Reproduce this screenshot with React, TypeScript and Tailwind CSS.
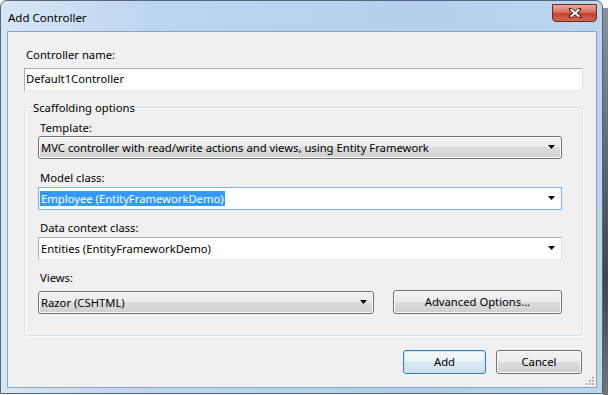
import React from "react";

const font = { fontFamily: '"Noto Sans", "Open Sans", Arial, sans-serif' };

function Arrow() {
  return (
    <svg width="8" height="5" viewBox="0 0 8 5" className="shrink-0">
      <path d="M0 0 H7 L3.5 4 Z" fill="#000" />
    </svg>
  );
}

function Label({ children, className = "" }: { children: React.ReactNode; className?: string }) {
  return <div className={"h-[15px] leading-[15px] text-[11.25px] text-black " + className}>{children}</div>;
}

function DropButton({ text, className = "" }: { text: string; className?: string }) {
  return (
    <div
      className={
        "h-[23px] rounded-[3px] border border-[#707070] flex items-center pl-[2px] pr-[5px] bg-[linear-gradient(to_bottom,#f2f2f2_0%,#ebebeb_50%,#dddddd_50%,#cfcfcf_100%)] shadow-[inset_0_0_0_1px_#fcfcfc] " +
        className
      }
    >
      <span className="flex-1 text-[11.25px] leading-[15px] text-black whitespace-nowrap">{text}</span>
      <Arrow />
    </div>
  );
}

function Combo({ text, selected = false, focus = false }: { text: string; selected?: boolean; focus?: boolean }) {
  return (
    <div
      className={
        "h-[23px] border flex items-center pl-[1px] pr-[5px] bg-white " +
        (focus ? "border-[#7eb4ea]" : "border-[#abadb3] border-b-[#e3e9ef] border-r-[#dbdfe6]")
      }
    >
      <span className="flex-1 flex">
        <span
          className={
            "text-[11.25px] leading-[15px] px-[1px] whitespace-nowrap " +
            (selected ? "bg-[#3399ff] text-white" : "text-black")
          }
        >
          {text}
        </span>
      </span>
      <Arrow />
    </div>
  );
}

function Button({ text, def = false, className = "" }: { text: string; def?: boolean; className?: string }) {
  return (
    <div
      className={
        "h-[24px] rounded-[3px] border flex items-center justify-center text-[11.25px] text-black " +
        (def
          ? "border-[#3c7fb1] bg-[linear-gradient(to_bottom,#f4f9fc_0%,#e8f2f8_50%,#d9e8f1_50%,#cfe1ec_100%)] shadow-[inset_0_0_0_1px_#bfe9fb]"
          : "border-[#707070] bg-[linear-gradient(to_bottom,#f2f2f2_0%,#ebebeb_50%,#dddddd_50%,#cfcfcf_100%)] shadow-[inset_0_0_0_1px_#fcfcfc]") +
        " " +
        className
      }
    >
      {text}
    </div>
  );
}

export default function App() {
  return (
    <div className="w-[608px] h-[395px] bg-white flex overflow-hidden" style={font}>
      <div className="w-[603px] h-[394px] flex flex-col rounded-t-[7px] border border-[#52667c] bg-[linear-gradient(to_right,#d7e6f5_0%,#bcd5ef_25%,#b4cfed_70%,#bdd6ef_100%)] pl-[6px] pr-[5px] pb-[5px] relative">
        <div className="h-[30px] flex items-start shrink-0">
          <div className="pt-[9px] pl-[1px] text-[11.5px] leading-[15px] text-black">Add Controller</div>
          <div className="flex-1" />
          <div className="mt-[3px] w-[45px] h-[18px] rounded-b-[4px] border border-[#6c2a24] bg-[linear-gradient(to_bottom,#e9a99b_0%,#d7725f_45%,#c4402a_55%,#d06a4f_100%)] flex items-center justify-center">
            <svg width="12" height="10" viewBox="0 0 12 10">
              <path d="M1 1 L11 9 M11 1 L1 9" stroke="#3a1a16" strokeWidth="3.4" strokeLinecap="square" />
              <path d="M1.5 1.2 L10.5 8.8 M10.5 1.2 L1.5 8.8" stroke="#ffffff" strokeWidth="2" />
            </svg>
          </div>
        </div>
        <div className="flex-1 border border-[#8ea4bd] bg-[#f0f0f0] flex flex-col pl-[16px] pr-[13px] relative">
          <Label className="mt-[15px] pl-[2px]">Controller name:</Label>
          <div className="mt-[6px] h-[23px] border border-[#abadb3] border-b-[#e3e9ef] border-r-[#dbdfe6] bg-white flex items-center pl-[1px] text-[11.25px]">
            Default1Controller
          </div>
          <div className="mt-[16px] h-[229px] relative rounded-[3px] border border-[#d5dfe5] shadow-[inset_1px_1px_0_#ffffff,1px_1px_0_#ffffff] flex flex-col pl-[13px] pr-[20px] pt-[12px]">
            <div className="absolute left-[7px] top-[-8px] px-[1px] bg-[#f0f0f0] text-[11.25px] leading-[15px]">
              Scaffolding options
            </div>
            <Label className="pl-[2px]">Template:</Label>
            <DropButton className="mt-[1px]" text="MVC controller with read/write actions and views, using Entity Framework" />
            <Label className="mt-[11px] pl-[2px]">Model class:</Label>
            <div className="mt-[2px]">
              <Combo text="Employee (EntityFrameworkDemo)" selected focus />
            </div>
            <Label className="mt-[10px] pl-[2px]">Data context class:</Label>
            <div className="mt-[2px]">
              <Combo text="Entities (EntityFrameworkDemo)" />
            </div>
            <Label className="mt-[10px] pl-[2px]">Views:</Label>
            <div className="mt-[6px] flex items-start">
              <DropButton className="w-[336px]" text="Razor (CSHTML)" />
              <div className="flex-1" />
              <Button className="w-[169px] -mt-[1px]" text="Advanced Options..." />
            </div>
          </div>
          <div className="mt-[14px] flex justify-end gap-[10px] pr-[1px]">
            <Button def className="w-[83px]" text="Add" />
            <Button className="w-[86px]" text="Cancel" />
          </div>
          <svg className="absolute right-[1px] bottom-[1px]" width="10" height="10" viewBox="0 0 10 10">
            <g fill="#b8b8b8">
              <rect x="7" y="1" width="2" height="2" />
              <rect x="4" y="4" width="2" height="2" />
              <rect x="7" y="4" width="2" height="2" />
              <rect x="1" y="7" width="2" height="2" />
              <rect x="4" y="7" width="2" height="2" />
              <rect x="7" y="7" width="2" height="2" />
            </g>
          </svg>
        </div>
      </div>
      <div className="w-[5px] flex flex-col">
        <div className="h-[8px] bg-white" />
        <div className="flex-1 bg-[linear-gradient(to_bottom,#8a929b_0%,#5e6670_40%,#3e444b_70%,#6f767e_100%)]" />
      </div>
    </div>
  );
}
